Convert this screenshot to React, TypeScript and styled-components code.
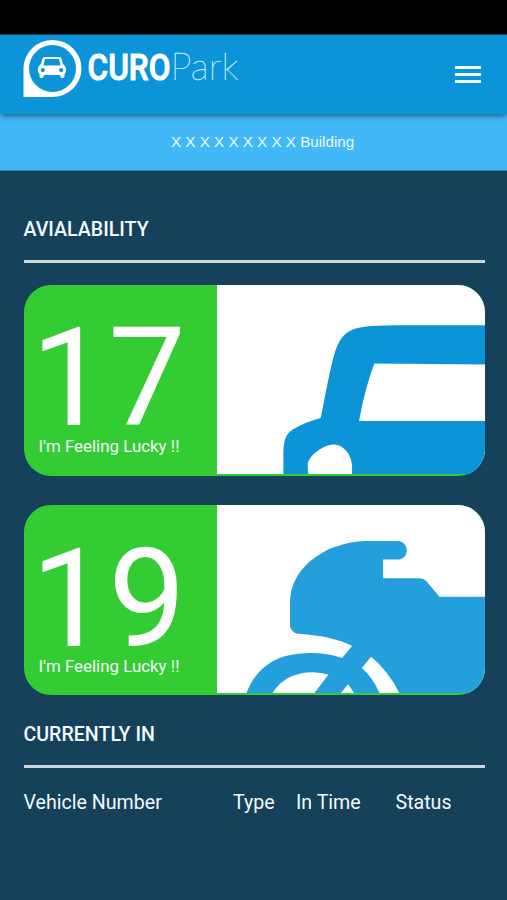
import React from 'react';
import styled, { createGlobalStyle } from 'styled-components';

const GlobalStyle = createGlobalStyle`
  * { box-sizing: border-box; }
  body { margin: 0; background: #16415a; }
`;

const Screen = styled.div`
  display: flex;
  flex-direction: column;
  width: 507px;
  height: 900px;
  overflow: hidden;
  background: #16415a;
  color: #f4fafd;
  font-family: Roboto, 'Liberation Sans', sans-serif;
`;

const StatusBar = styled.div`
  flex: none;
  height: 35px;
  background: #000;
  border-bottom: 1px solid #07466c;
`;

const Header = styled.header`
  flex: none;
  position: relative;
  display: flex;
  justify-content: space-between;
  height: 79px;
  padding: 4px 26.5px 0 22px;
  background: #0c94d9;
  box-shadow: 0 3px 5px -1px rgba(20, 60, 85, 0.75);
`;

const Logo = styled.svg`
  display: block;
  width: 222px;
  height: 60px;
`;

const MenuButton = styled.button`
  display: flex;
  flex-direction: column;
  gap: 4px;
  height: 18px;
  margin: 26.5px 0 0;
  padding: 0;
  border: 0;
  background: none;
`;

const MenuLine = styled.span`
  width: 26px;
  height: 3px;
  background: #f0fbff;
`;

const BuildingBar = styled.div`
  flex: none;
  height: 57px;
  padding: 19px 0 0 171px;
  border-bottom: 1px solid #2c7dab;
  background: #42b8f6;
  color: #eefaff;
  font-family: 'Liberation Sans', Arial, sans-serif;
  font-size: 15.2px;
  line-height: 18px;
  white-space: nowrap;
`;

const Content = styled.main`
  display: flex;
  flex-direction: column;
  padding: 46px 22.5px 0 23.5px;
`;

const SectionTitle = styled.h2`
  height: 43px;
  margin: 0;
  padding-top: 2px;
  font-size: 19.6px;
  font-weight: 500;
  line-height: 22px;
  white-space: nowrap;
`;

const Rule = styled.div`
  height: 3px;
  background: #cdd5dc;
`;

const Card = styled.section<{ $height: number; $top: number }>`
  display: flex;
  height: ${(p) => p.$height}px;
  margin-top: ${(p) => p.$top}px;
  border-radius: 27px;
  overflow: hidden;
  background: #33cd33;
`;

const Availability = styled.div`
  display: flex;
  flex-direction: column;
  flex: none;
  width: 193.5px;
  padding: 36.5px 0 0 15px;
`;

const Count = styled.div`
  height: 114.5px;
  margin-left: -7.5px;
  color: #fff;
  font-size: 138px;
  line-height: 115px;
  letter-spacing: -0.2px;
`;

const Note = styled.div`
  font-size: 16.9px;
  line-height: 20px;
  white-space: nowrap;
`;

const Art = styled.svg`
  display: block;
  flex: none;
  width: 267.5px;
  height: calc(100% - 1.5px);
  background: #fff;
`;

const Spacer = styled.div`
  height: 27px;
`;

const Columns = styled.div`
  display: grid;
  grid-template-columns: 209.5px 63px 99.5px 1fr;
  margin-top: 23.5px;
  font-size: 19.6px;
  line-height: 23px;
  white-space: nowrap;
`;

const CarArt = () => (
  <Art viewBox="22 29 802 570" preserveAspectRatio="none">
    <path
      fill="#0c94d9"
      fillRule="evenodd"
      d="M221 602V545C221 485 232 473 260 458Q286 442 333 429C347 359 361 280 373 240C390 180 414 162 460 155Q490 150 560 150H826V602H427V577C427 540 402 509 370 509C345 509 294 542 294 571Q294 590 297 602ZM494 265C475 315 460 372 448 438H826V268Z"
    />
  </Art>
);

const BikeArt = () => (
  <Art viewBox="22 31 802 565" preserveAspectRatio="none">
    <path
      fill="#239fdc"
      d="M468 139H564C600 142 600 193 564 195H520V251H630Q642 251 650 260L689 307H826V600H570Q539 532 484 487L456 521Q489 549 511 600H436L415 570L390 600H311L356 541C300 523 222 535 186 600H109C131 536 179 498 228 485C288 471 345 473 397 491L427 455Q372 425 265 418Q249 417 241 397V325C241 255 285 204 337 175Q362 158 386 154Q420 140 468 139Z"
    />
  </Art>
);

const BrandLogo = () => (
  <Logo viewBox="22 39 222 60" role="img">
    <path
      fill="#fff"
      fillRule="evenodd"
      d="M23.5 97V68A29 28.5 0 1 1 52 97ZM52.5 45A23.5 23.5 0 1 0 52.5 92A23.5 23.5 0 1 0 52.5 45Z"
    />
    <path
      fill="#fff"
      fillRule="evenodd"
      d="M44.5 57H59.5Q61 57 61.6 59L63 64Q66 66 66 70Q66 73 64.5 74V76.2Q64.5 78 62.5 78Q60.2 78 60 75H44Q43.8 78 41.5 78Q39.5 78 39.5 76.2V74Q37.8 73 37.8 70Q37.8 66 41 64L42.3 59Q43 57 44.5 57ZM45 59L43.4 65.5H60.5L59 59ZM42.8 68A2.1 2.1 0 1 0 42.8 72.2A2.1 2.1 0 1 0 42.8 68ZM61.2 68A2.1 2.1 0 1 0 61.2 72.2A2.1 2.1 0 1 0 61.2 68Z"
    />
    <text
      x="87.5"
      y="79.7"
      fill="#fff"
      stroke="#fff"
      strokeWidth="1"
      strokeLinejoin="round"
      fontFamily="Roboto, sans-serif"
      fontSize="36.5"
      fontWeight="500"
      textLength="83"
      lengthAdjust="spacingAndGlyphs"
    >
      CURO
    </text>
    <text
      x="170.5"
      y="80"
      fill="#d4efff"
      stroke="#d4efff"
      strokeWidth="0.35"
      fontFamily="Lato, sans-serif"
      fontSize="37"
      fontWeight="100"
      textLength="68"
      lengthAdjust="spacingAndGlyphs"
    >
      Park
    </text>
  </Logo>
);

export default function App() {
  return (
    <>
      <GlobalStyle />
      <Screen>
        <StatusBar />
        <Header>
          <BrandLogo />
          <MenuButton aria-label="Menu">
            <MenuLine />
            <MenuLine />
            <MenuLine />
          </MenuButton>
        </Header>
        <BuildingBar>X X X X X X X X X Building</BuildingBar>
        <Content>
          <SectionTitle>AVIALABILITY</SectionTitle>
          <Rule />
          <Card $height={191} $top={21.5}>
            <Availability>
              <Count>17</Count>
              <Note>I'm Feeling Lucky !!</Note>
            </Availability>
            <CarArt />
          </Card>
          <Card $height={189.5} $top={29.5}>
            <Availability>
              <Count>19</Count>
              <Note>I'm Feeling Lucky !!</Note>
            </Availability>
            <BikeArt />
          </Card>
          <Spacer />
          <SectionTitle>CURRENTLY IN</SectionTitle>
          <Rule />
          <Columns>
            <span>Vehicle Number</span>
            <span>Type</span>
            <span>In Time</span>
            <span>Status</span>
          </Columns>
        </Content>
      </Screen>
    </>
  );
}
